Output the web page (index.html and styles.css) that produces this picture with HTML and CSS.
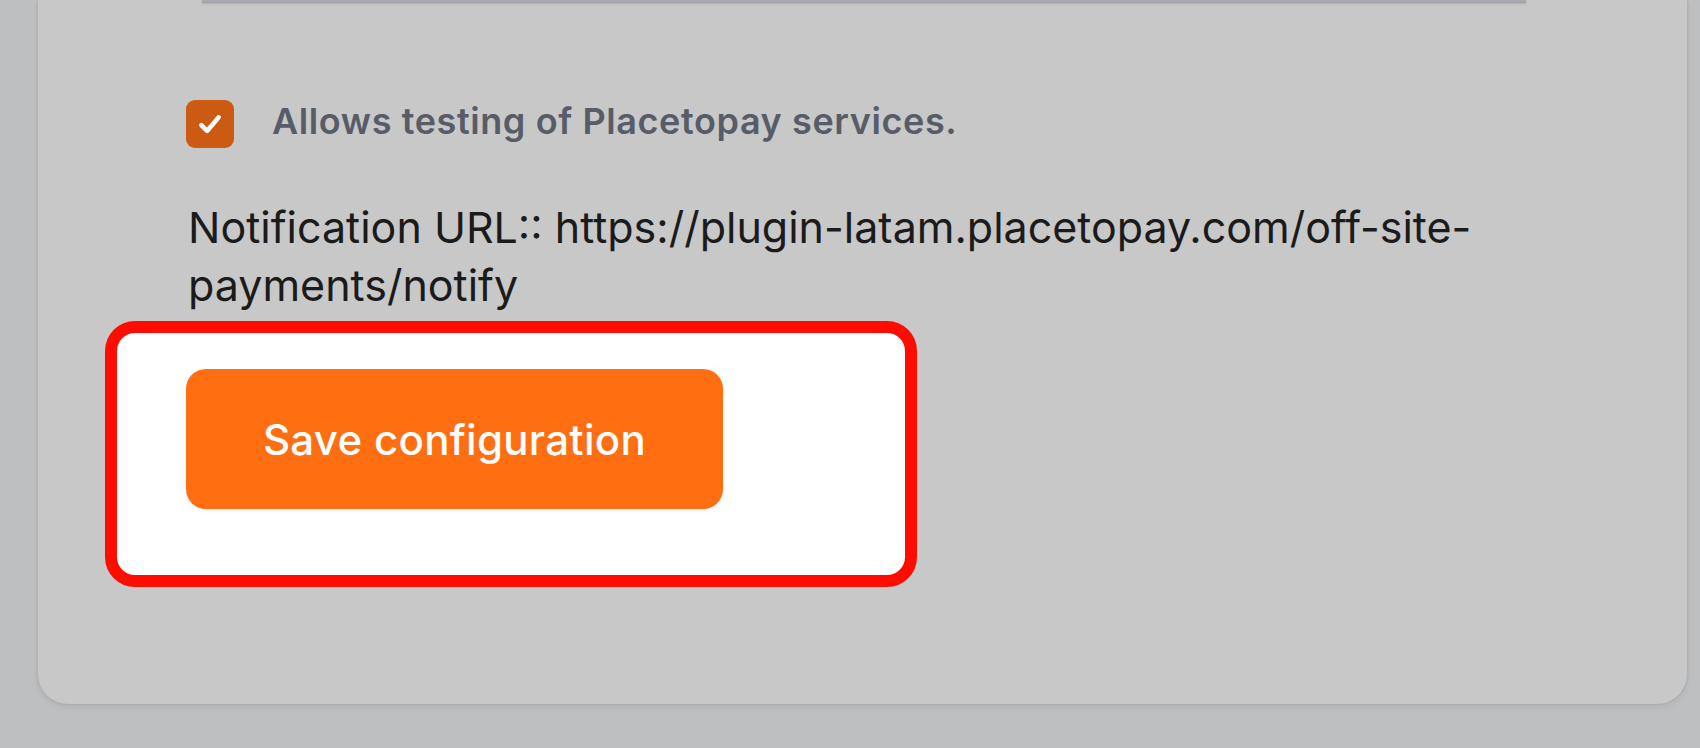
FILE: index.html
```html
<!DOCTYPE html>
<html lang="en">
<head>
<meta charset="utf-8">
<title>Placetopay configuration</title>
<link rel="stylesheet" href="styles.css">
</head>
<body>
<div class="page">
  <div class="card">
    <div class="input-edge"></div>
    <label class="check-row">
      <span class="checkbox">
        <svg viewBox="0 0 24 24" width="32" height="32" aria-hidden="true">
          <path d="M5.5 12.8l4.3 4.4L18.5 7" fill="none" stroke="#ffffff" stroke-width="3.4" stroke-linecap="round" stroke-linejoin="round"/>
        </svg>
      </span>
      <span class="check-label">Allows testing of Placetopay services.</span>
    </label>
    <p class="notify">Notification URL:: https://plugin-latam.placetopay.com/off-site-payments/notify</p>
    <div class="highlight">
      <button class="save-btn" type="button">Save configuration</button>
    </div>
  </div>
</div>
</body>
</html>
```

FILE: styles.css
```css
html, body {
  margin: 0;
  padding: 0;
}
body {
  background: #bebfc1;
  font-family: "Inter", "Noto Sans", sans-serif;
  width: 1700px;
  height: 748px;
  overflow: hidden;
}
.page {
  padding-left: 38px;
}
.card {
  width: 1649px;
  box-sizing: border-box;
  background: #c8c8c8;
  border-radius: 0 0 30px 30px;
  box-shadow: 0 3px 6px rgba(0, 0, 0, 0.08), -1px 0 2px rgba(0,0,0,0.05), 1px 0 2px rgba(0,0,0,0.05);
  padding: 0 0 117px 148px;
}
.input-edge {
  margin-left: 16px;
  width: 1324px;
  height: 2px;
  background: #a9abb0;
  border-bottom: 1px solid #9c9fa6;
  box-shadow: 0 1px 2px rgba(0, 0, 0, 0.12);
}
.check-row {
  display: flex;
  align-items: flex-start;
  gap: 38px;
  margin-top: 97px;
}
.checkbox {
  width: 48px;
  height: 48px;
  border-radius: 9px;
  background: #cc5a13;
  display: flex;
  align-items: center;
  justify-content: center;
  flex: none;
}
.check-label {
  margin-top: -1px;
  font-size: 36px;
  font-weight: 600;
  color: #575c68;
  letter-spacing: 0.6px;
  line-height: 44px;
}
.notify {
  margin: 50px 0 0 2px;
  width: 1320px;
  font-size: 43px;
  line-height: 58px;
  color: #1b1b1b;
}
.highlight {
  box-sizing: border-box;
  margin: 7px 0 0 -81px;
  width: 812px;
  border: 12px solid #ff0c00;
  border-radius: 30px;
  background: #ffffff;
  padding: 36px 0 66px 69px;
}
.save-btn {
  display: block;
  width: 537px;
  height: 140px;
  border: none;
  border-radius: 20px;
  background: #ff6e10;
  color: #ffffff;
  font-family: "Inter", "Noto Sans", sans-serif;
  font-size: 42px;
  font-weight: 500;
  letter-spacing: 0.3px;
  box-shadow: 0 2px 4px rgba(0, 0, 0, 0.06);
}
```
